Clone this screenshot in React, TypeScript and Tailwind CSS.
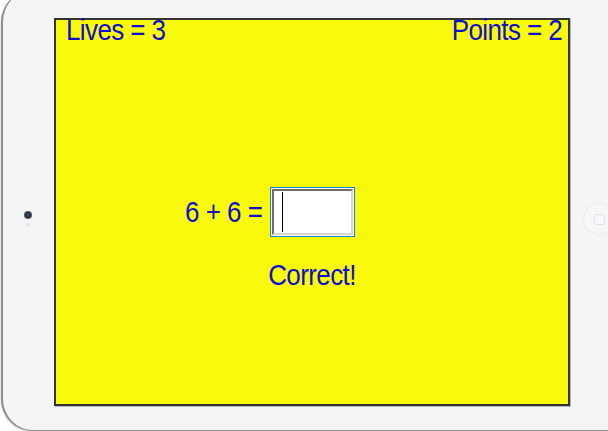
function AnswerBox() {
  return (
    <div className="h-[50px] w-[85px] border border-[#1f7fd6] bg-white p-px">
      <div className="flex h-full w-full border-2 border-t-[#6f6f6f] border-l-[#6f6f6f] border-r-[#d6d6d6] border-b-[#d6d6d6] bg-white pl-[8px] py-px">
        <div className="w-px bg-black" />
      </div>
    </div>
  )
}

export default function App() {
  return (
    <div className="h-[431px] w-[608px] overflow-hidden bg-white font-['Liberation_Sans',Arial,sans-serif]">
      <div className="ml-px -mt-[10px] flex h-[441px] w-[650px] rounded-[32px] border-l-2 border-b border-[#8c8c8c] bg-[#f4f5f7] shadow-[0_1px_2px_rgba(0,0,0,0.25)]">
        {/* camera side */}
        <div className="flex w-[51px] flex-col items-center justify-center pr-[2px] pt-[18px]">
          <div className="h-[6px] w-[6px] rounded-full bg-[#2e3440] ring-1 ring-[#555]">
            <div className="m-[2px] h-[2px] w-[2px] rounded-full bg-[#2d5fb0]" />
          </div>
          <div className="mt-[5px] h-[4px] w-[4px] rounded-full bg-[#e4e5e8]" />
        </div>

        {/* screen */}
        <div className="mt-[28px] flex h-[388px] w-[516px] flex-col border-2 border-[#333] bg-[#f9f90b] text-[26px] leading-[26px] tracking-[-0.6px] text-[#1010cc] shadow-[1px_1px_0_#b5b5b5]">
          <div className="-mt-[3px] flex justify-between pl-[10px] pr-[6px]">
            <span className="inline-block scale-y-[1.14]">Lives = 3</span>
            <span className="inline-block scale-y-[1.14]">Points = 2</span>
          </div>

          <div className="mt-[144px] grid grid-cols-[1fr_auto_1fr] items-center">
            <span className="inline-block justify-self-end pr-[7px] tracking-[-0.5px] scale-y-[1.14]">6 + 6 =</span>
            <AnswerBox />
            <span />
          </div>

          <div className="mt-[25px] flex justify-center">
            <span className="inline-block scale-y-[1.14]">Correct!</span>
          </div>
        </div>

        {/* home button side */}
        <div className="flex flex-1 items-center pl-[14px] pt-[18px]">
          <div className="flex h-[30px] w-[30px] items-center justify-center rounded-full bg-[#f6f7f9] shadow-[0_0_2px_rgba(0,0,0,0.12)]">
            <div className="h-[11px] w-[11px] rounded-[3px] border border-[#e2e3e6] bg-[#f7f8fa]" />
          </div>
        </div>
      </div>
    </div>
  )
}
